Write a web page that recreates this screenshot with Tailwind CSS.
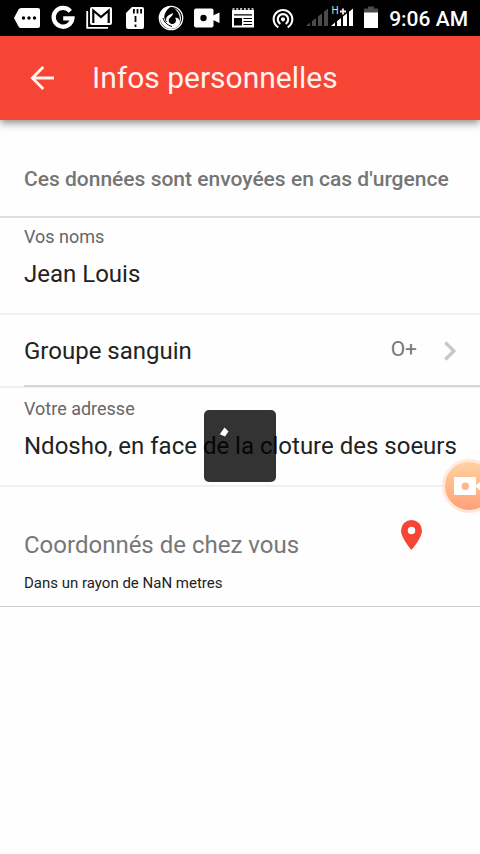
<!DOCTYPE html>
<html lang="fr">
<head>
<meta charset="utf-8">
<title>Infos personnelles</title>
<script src="https://cdn.jsdelivr.net/npm/@tailwindcss/browser@4"></script>
</head>
<body class="bg-white">
<div class="relative w-[480px] h-[854px] overflow-hidden bg-[#fefefe] font-['Roboto',sans-serif] text-[#222] whitespace-nowrap">
  <!-- Status bar -->
  <div class="flex h-9 items-center bg-black pl-[9px] pr-3 text-white">
    <svg class="h-9 w-9" viewBox="0 0 36 36" fill="#fff"><path d="M12 8H29Q31 8 31 10V26Q31 28 29 28H12Q10.500 28 9.500 26.500L5 18L9.500 9.500Q10.500 8 12 8Z"/><g fill="#000"><circle cx="14.500" cy="18" r="1.700"/><circle cx="20" cy="18" r="1.700"/><circle cx="25.500" cy="18" r="1.700"/></g></svg>
    <svg class="h-9 w-9" viewBox="0 0 36 36" fill="none" stroke="#fff" stroke-width="4.300"><path d="M25.300 11.300A9.400 9.400 0 1 0 27.400 18.300H18.200"/></svg>
    <svg class="h-9 w-9" viewBox="0 0 36 36"><path d="M6.200 11V27.800H27" fill="none" stroke="#fff" stroke-width="1.800"/><rect x="9" y="7" width="22" height="18" rx="2" fill="#fff"/><path d="M12.300 23V10.500L20 17L27.700 10.500V23" fill="none" stroke="#000" stroke-width="2.200"/></svg>
    <svg class="h-9 w-9" viewBox="0 0 36 36"><path d="M15 7H25Q27 7 27 9V27Q27 29 25 29H11Q9 29 9 27V13Z" fill="#fff"/><path d="M16.900 9V13.500M20.500 9V13.500M24.100 9V13.500M18.500 16V22M18.500 24.500V27" stroke="#000" stroke-width="1.800"/></svg>
    <svg class="h-9 w-9" viewBox="0 0 36 36">
      <circle cx="18" cy="18" r="11.700" fill="none" stroke="#fff" stroke-width="1.300"/>
      <path fill="#fff" d="M19 6C10 6 6 12 7 19C8 24 12 28 17 29C23 29 27 26 27 22C27 19 24 17 22 18C24 20 23 23 20 24C17 24 15 22 16 19C17 17 20 16 20 13L18 14C15 15 13 17 13 20C10 16 12 10 19 6Z"/>
      <path fill="#fff" d="M21 8C28 11 30 19 26 25C28 19 27 13 21 8Z"/>
      <path d="M10 18C11 22 14 25 19 26.500M15 11C11.500 14 10.800 18 13.500 22" fill="none" stroke="#000" stroke-width="1"/>
    </svg>
    <svg class="h-9 w-9" viewBox="0 0 36 36" fill="#fff"><rect x="5" y="8.500" width="19.500" height="19" rx="2"/><path d="M24 15.500L30.500 12.500V23L24 20Z"/><circle cx="14.500" cy="18" r="3.200" fill="#000"/></svg>
    <svg class="h-9 w-9" viewBox="0 0 36 36"><path d="M7 10H29V27.500H7Z" fill="#fff"/><path d="M7.500 9H29" stroke="#fff" stroke-width="1.600" stroke-dasharray="2 1.800"/><path d="M9 14.800H27M18.500 18.500H27M18.500 21.500H27M18.500 24.500H27" stroke="#000" stroke-width="1.200"/><path d="M9 18H17V25.500H9Z"/></svg>
    <svg class="ml-1 h-9 w-9" viewBox="0 0 36 36" fill="#fff"><path transform="translate(18 19.300) scale(1.040) translate(-12 -13)" d="M12 11c-1.100 0-2 .9-2 2s.9 2 2 2 2-.9 2-2-.9-2-2-2zm6 2c0-3.310-2.690-6-6-6s-6 2.690-6 6c0 2.220 1.210 4.150 3 5.190l1-1.740c-1.190-.7-2-1.970-2-3.450 0-2.210 1.790-4 4-4s4 1.790 4 4c0 1.480-.81 2.750-2 3.450l1 1.740c1.790-1.040 3-2.970 3-5.190zM12 3C6.480 3 2 7.480 2 13c0 3.700 2.010 6.920 4.990 8.650l1-1.730C5.610 18.530 4 15.960 4 13c0-4.420 3.580-8 8-8s8 3.580 8 8c0 2.960-1.610 5.530-4 6.920l1 1.730c2.990-1.730 5-4.950 5-8.650 0-5.520-4.480-10-10-10z"/></svg>
    <svg class="ml-[3px] h-9 w-[78px]" viewBox="304 0 78 36">
      <path d="M306 26L310 22.500V26ZM312 26V21.300L316 18V26ZM318 26V16.500L322 13.200V26ZM324 26V11.800L328 8.500V26Z" fill="#4b4b4b"/>
      <path d="M331 26L335 22.500V26ZM337 26V21.300L341 18V26ZM343 26V16.500L347 13.200V26ZM349 26V11.800L353 8.500V26Z" fill="#fff"/>
      <text x="331.500" y="14" class="font-['Roboto',sans-serif] text-[10px]" fill="#ddd">H</text>
      <path d="M340 11.500H346M343 8.500V14.500" stroke="#eee" stroke-width="1.800"/>
      <path d="M364 8.500H368V6.500H374V8.500H378V28H364Z" fill="#4b4b4b"/><path d="M364 12.500H378V28H364Z" fill="#fff"/>
    </svg>
    <span class="ml-auto pt-[2px] text-[21px] font-medium leading-[34px]">9:06 AM</span>
  </div>

  <!-- Toolbar -->
  <header class="relative flex h-[84px] items-center bg-[#f64435] pl-[30px] text-[#fff2ef] shadow-[0_3px_8px_0px_rgba(0,0,0,0.45)]">
    <svg class="h-[24px] w-[24px]" viewBox="0 0 24 24" fill="none" stroke="currentColor" stroke-width="2.800"><path d="M24 12H2M13.300 1L2.300 12L13.300 23"/></svg>
    <h1 class="ml-[38px] text-[30px] leading-[36px]">Infos personnelles</h1>
  </header>

  <main>
    <h2 class="flex h-[98px] items-center border-b-2 border-[#dedede] px-6 pt-6 text-[21px] font-medium text-[#757575]">Ces données sont envoyées en cas d'urgence</h2>
    <section class="h-[97px] border-b-2 border-[#f0f0f0] px-6 pt-2">
      <p class="text-[18px] leading-[22px] text-[#666]">Vos noms</p>
      <p class="mt-[11px] text-[24px] leading-[30px]">Jean Louis</p>
    </section>
    <section class="flex h-[73px] border-b-2 border-[#f0f0f0] pl-6">
      <div class="flex h-[72px] flex-1 items-center border-b-2 border-[#d6d6d6] pr-6 pt-[2px]">
        <span class="text-[24px]">Groupe sanguin</span>
        <span class="ml-auto pb-[3px] text-[21px] text-[#777]">O+</span>
        <svg class="ml-[27px] h-[20px] w-[12px]" viewBox="0 0 12 20" fill="none" stroke="#c8c8ca" stroke-width="3.300"><path d="M1.300 1.500L9.800 10L1.300 18.500"/></svg>
      </div>
    </section>
    <section class="h-[99px] border-b-2 border-[#f0f0f0] px-6 pt-[10px]">
      <p class="text-[18px] leading-[22px] text-[#666]">Votre adresse</p>
      <p class="mt-[11px] text-[24px] leading-[30px]">Ndosho, en face de la cloture des soeurs</p>
    </section>
    <section class="flex h-[120px] justify-between border-b border-[#cfcfcf] pl-6 pr-[58px]">
      <div class="pt-[43px]">
        <p class="text-[24px] leading-[30px] text-[#777]">Coordonnés de chez vous</p>
        <p class="mt-[13px] text-[15px] leading-[20px]">Dans un rayon de NaN metres</p>
      </div>
      <svg class="mt-[33px] h-[30px] w-[21px]" viewBox="0 0 21 30" fill="#f64435"><path fill-rule="evenodd" d="M10.500 0A10.500 10.500 0 0 0 0 10.500C0 18 10.500 30 10.500 30S21 18 21 10.500A10.500 10.500 0 0 0 10.500 0ZM10.500 6.800A3.750 3.750 0 1 1 10.500 14.300A3.750 3.750 0 0 1 10.500 6.800Z"/></svg>
    </section>
  </main>

  <!-- Loading overlay -->
  <div class="absolute left-[204px] top-[410px] h-[72px] w-[72px] rounded-[5px] bg-black/80">
    <svg class="ml-[15px] mt-[17px] h-[10px] w-[10px]" viewBox="0 0 10 10" fill="#fff"><path d="M5.500 0.500L9.500 4.500L6 9.500L0.800 7.300Z"/></svg>
  </div>

  <!-- Floating recorder button -->
  <div class="absolute left-[442px] top-[459px] h-[54px] w-[54px] rounded-full border-[3px] border-[#ffe8dc] bg-linear-to-b from-[#ffd2a0] to-[#ffa078]">
    <svg class="h-[48px] w-[48px]" viewBox="0 0 48 48" fill="#fff"><rect x="9" y="15" width="22" height="18" rx="1"/><path d="M30 24L38 17V31Z"/><circle cx="20.300" cy="24.300" r="3.700" fill="#ffb78a"/></svg>
  </div>
</div>
</body>
</html>
